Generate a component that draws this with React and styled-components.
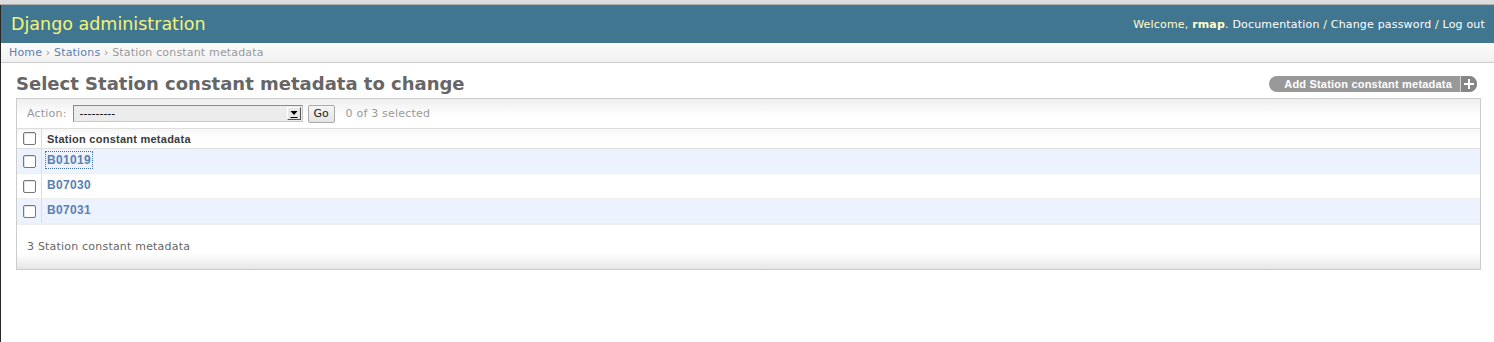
import React from 'react';
import styled, { createGlobalStyle } from 'styled-components';

const GlobalStyle = createGlobalStyle`
  html, body { margin: 0; padding: 0; background: #fff; }
  body {
    font-family: "DejaVu Sans", Verdana, sans-serif;
    font-size: 12px;
    color: #333;
  }
  a { color: #5b80b2; text-decoration: none; }
`;

const Page = styled.div`
  min-height: 100vh;
  display: flex;
  flex-direction: column;
`;

const TopStrip = styled.div`
  height: 4px;
  background: #dcdcdc;
  border-bottom: 1px solid #b0b0b0;
`;

const Frame = styled.div`
  flex: 1;
  border-left: 1px solid #262626;
  display: flex;
  flex-direction: column;
`;

const Header = styled.header`
  height: 38px;
  background: #417690;
  color: #ffc;
  display: flex;
  align-items: center;
  justify-content: space-between;
`;

const Branding = styled.h1`
  margin: 0;
  padding: 0 10px;
  font-size: 17.5px;
  line-height: 22px;
  font-weight: normal;
  color: #f4f379;
`;

const UserTools = styled.div`
  padding: 0 9px 0 10px;
  font-size: 11px;
  letter-spacing: 0.18px;
  color: #ffc;
  white-space: nowrap;
  strong { font-weight: bold; }
  a { color: #fff; }
`;

const Breadcrumbs = styled.nav`
  padding: 2px 8px 3px;
  font-size: 11px;
  letter-spacing: 0.17px;
  line-height: 13px;
  color: #999;
  border-top: 1px solid #fff;
  border-bottom: 1px solid #ccc;
  background: linear-gradient(#fbfbfb, #f1f1f1);
`;

const Content = styled.main`
  margin: 10px 13px 10px 15px;
`;

const TitleRow = styled.div`
  display: flex;
  justify-content: space-between;
  align-items: flex-start;
`;

const Title = styled.h1`
  margin: 0 0 4px;
  font-size: 18px;
  line-height: 21px;
  font-weight: bold;
  color: #666;
`;

const AddLink = styled.a`
  margin: 3px 4px 0 0;
  display: flex;
  align-items: stretch;
  height: 16px;
  border-radius: 8px;
  overflow: hidden;
  background: #999;
  color: #fff;
  font-family: "Liberation Sans", Arial, sans-serif;
  font-size: 11px;
  letter-spacing: 0.2px;
  font-weight: bold;
  line-height: 16px;
`;

const AddLabel = styled.span`
  padding: 0 8px 0 15px;
`;

const AddIcon = styled.span`
  width: 16px;
  background: #868686;
  border-left: 1px solid #d4d4d4;
  display: flex;
  align-items: center;
  justify-content: center;
`;

const Module = styled.section`
  border: 1px solid #ccc;
  background: #fff;
  margin-bottom: 5px;
`;

const Actions = styled.div`
  height: 29px;
  padding: 0 10px;
  display: flex;
  align-items: center;
  color: #999;
  font-size: 11px;
  letter-spacing: 0.2px;
  border-bottom: 1px solid #ddd;
  background: linear-gradient(#efefef, #fff 60%);
`;

const Select = styled.div`
  margin-left: 6px;
  width: 230px;
  height: 17px;
  box-sizing: border-box;
  border: 1px solid #8a8a8a;
  border-right-color: #c8c8c8;
  border-bottom-color: #c8c8c8;
  background: #ececec;
  display: flex;
  align-items: center;
  justify-content: space-between;
  color: #000;
  font-size: 11px;
  letter-spacing: 0;
`;

const SelectValue = styled.span`
  padding-left: 6px;
`;

const SelectArrow = styled.span`
  width: 14px;
  height: 13px;
  margin-right: 1px;
  box-sizing: border-box;
  border: 1px solid;
  border-color: #fff #555 #555 #fff;
  background: #e8e8e8;
  display: flex;
  align-items: center;
  justify-content: center;
`;

const GoButton = styled.button`
  margin-left: 5px;
  width: 27px;
  height: 18px;
  padding: 0;
  font-family: "DejaVu Sans", Verdana, sans-serif;
  font-size: 11px;
  color: #222;
  background: linear-gradient(#f6f6f6, #e4e4e4);
  border: 1px solid #aaa;
  border-radius: 2px;
`;

const Counter = styled.span`
  margin-left: 11px;
`;

const Row = styled.div`
  display: grid;
  grid-template-columns: 24px 1fr;
  height: ${p => (p.$head ? 19 : 24)}px;
  border-bottom: 1px solid ${p => (p.$head ? '#ddd' : '#eee')};
  background: ${p => (p.$head ? 'linear-gradient(#f6f6f6, #fff 50%)' : p.$alt ? '#edf3fe' : '#fff')};
`;

const CheckCell = styled.div`
  display: flex;
  align-items: center;
  justify-content: center;
`;

const NameCell = styled.div`
  border-left: 1px solid #ddd;
  padding-left: 5px;
  display: flex;
  align-items: center;
`;

const Checkbox = styled.span`
  width: 13px;
  height: 13px;
  box-sizing: border-box;
  border: 1px solid #777;
  border-radius: 2px;
  background: #fff;
  box-shadow: inset 1px 1px 0 #e2e2e2;
`;

const HeadLabel = styled.span`
  font-family: "Liberation Sans", Arial, sans-serif;
  font-size: 11px;
  letter-spacing: 0.25px;
  font-weight: bold;
  color: #3a3a3a;
`;

const ItemLink = styled.a`
  font-family: "Liberation Sans", Arial, sans-serif;
  font-size: 12px;
  letter-spacing: 0.35px;
  font-weight: bold;
  line-height: 14px;
  margin-top: -2px;
  color: #5b80b2;
  outline: ${p => (p.$focused ? '1px dotted #4a6fa5' : 'none')};
  outline-offset: 1px;
`;

const Paginator = styled.div`
  padding: 10px 10px;
  line-height: 24px;
  font-size: 11px;
  letter-spacing: 0.2px;
  color: #666;
  border-top: 1px solid #eee;
  background: linear-gradient(#fff 65%, #e6e6e6);
`;

const items = ['B01019', 'B07030', 'B07031'];

export default function App() {
  return (
    <Page>
      <GlobalStyle />
      <TopStrip />
      <Frame>
        <Header>
          <Branding>Django administration</Branding>
          <UserTools>
            Welcome, <strong>rmap</strong>. <a href="#">Documentation</a> / <a href="#">Change password</a> / <a href="#">Log out</a>
          </UserTools>
        </Header>
        <Breadcrumbs>
          <a href="#">Home</a> › <a href="#">Stations</a> › Station constant metadata
        </Breadcrumbs>
        <Content>
          <TitleRow>
            <Title>Select Station constant metadata to change</Title>
            <AddLink href="#">
              <AddLabel>Add Station constant metadata</AddLabel>
              <AddIcon>
                <svg width="10" height="10" viewBox="0 0 10 10">
                  <path d="M5 0v10M0 5h10" stroke="#fff" strokeWidth="2" />
                </svg>
              </AddIcon>
            </AddLink>
          </TitleRow>
          <Module>
            <Actions>
              <label>Action:</label>
              <Select>
                <SelectValue>---------</SelectValue>
                <SelectArrow>
                  <svg width="8" height="8" viewBox="0 0 8 8">
                    <path d="M0.5 1h7L4 5z" fill="#000" />
                    <path d="M0.5 7.5h7" stroke="#000" strokeWidth="1" />
                  </svg>
                </SelectArrow>
              </Select>
              <GoButton>Go</GoButton>
              <Counter>0 of 3 selected</Counter>
            </Actions>
            <Row $head>
              <CheckCell><Checkbox /></CheckCell>
              <NameCell><HeadLabel>Station constant metadata</HeadLabel></NameCell>
            </Row>
            {items.map((it, i) => (
              <Row key={it} $alt={i % 2 === 0}>
                <CheckCell><Checkbox /></CheckCell>
                <NameCell>
                  <ItemLink href="#" $focused={i === 0}>{it}</ItemLink>
                </NameCell>
              </Row>
            ))}
            <Paginator>3 Station constant metadata</Paginator>
          </Module>
        </Content>
      </Frame>
    </Page>
  );
}
